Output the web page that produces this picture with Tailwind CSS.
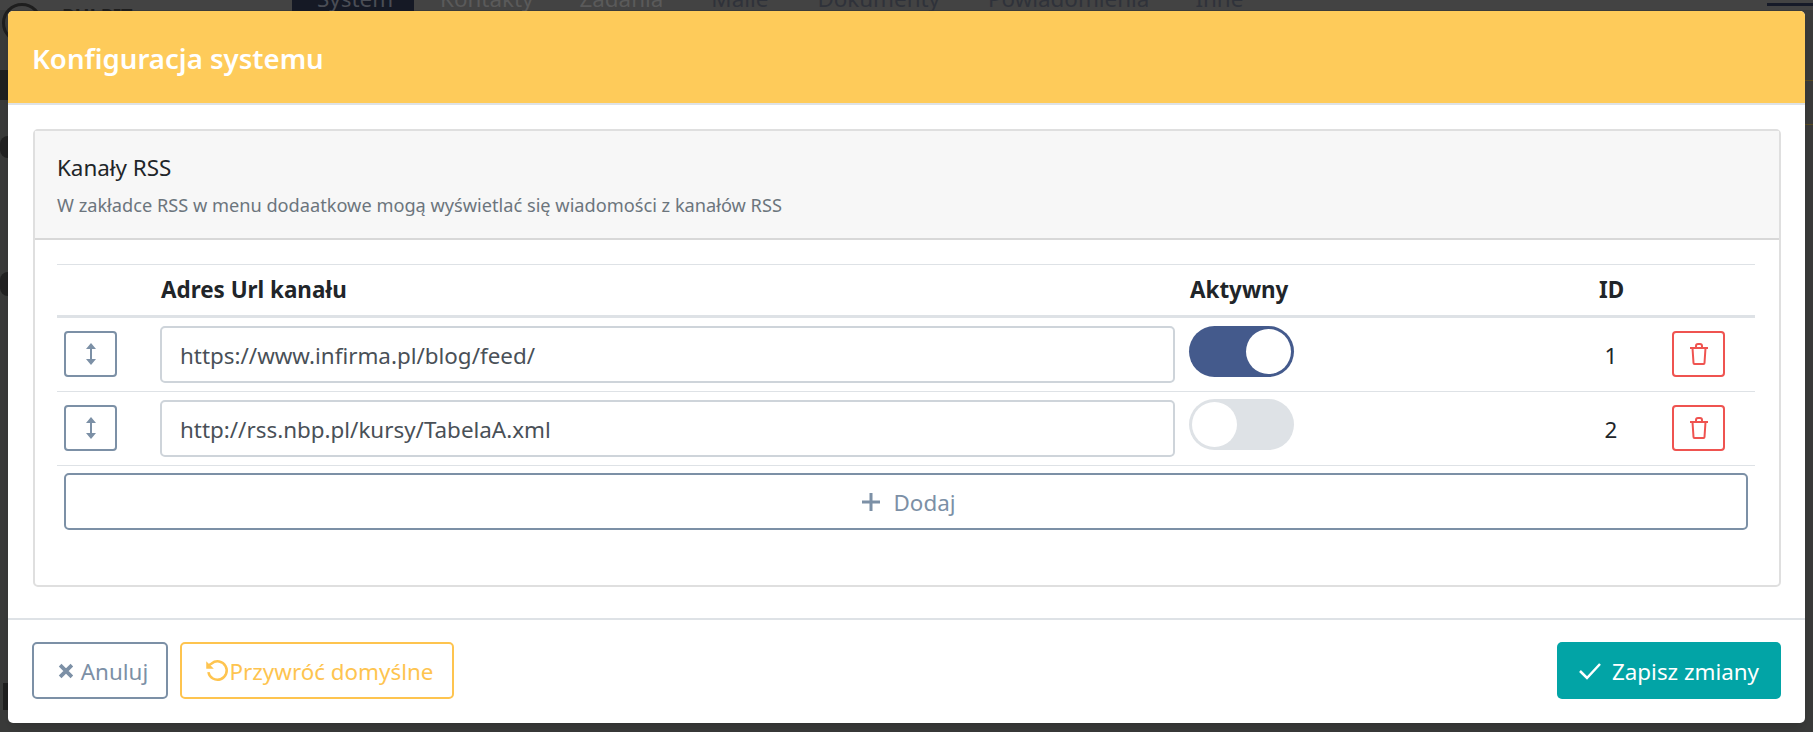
<!DOCTYPE html>
<html lang="pl">
<head>
<meta charset="utf-8">
<script src="https://cdn.jsdelivr.net/npm/@tailwindcss/browser@4"></script>
<title>Konfiguracja systemu</title>
</head>
<body class="h-[732px] w-[1813px] overflow-hidden bg-[#3a3b3a] font-['Noto_Sans','Open_Sans',sans-serif]">
<div class="relative h-[732px] w-[1813px] overflow-hidden">
  <!-- dimmed page behind the dialog -->
  <div class="absolute inset-x-0 top-0 h-[10px] bg-[#434343]"></div>
  <div class="absolute left-[2px] top-[3px] h-[40px] w-[40px] rounded-full border-[3px] border-[#1e1e1e]"></div>
  <div class="absolute left-[62px] top-[3px] text-[20px] font-bold leading-[25px] text-[#1e1e1e]">PULPIT</div>
  <div class="absolute left-[292px] top-[-14px] flex h-[25px] items-center text-[22.400px] leading-[25px] text-[#5a5a5a]">
    <span class="bg-[#151925] pl-[25px] pr-[21px] text-[#4a4d55]">System</span>
    <span class="ml-[26px]">Kontakty</span>
    <span class="ml-[46px]">Zadania</span>
    <span class="ml-[48px] text-[#2f323a]">Maile</span>
    <span class="ml-[49px] text-[#2f323a]">Dokumenty</span>
    <span class="ml-[48px] text-[#2f323a]">Powiadomienia</span>
    <span class="ml-[46px] text-[#2f323a]">Inne</span>
  </div>
  <div class="absolute left-[1767px] top-[3px] h-[3px] w-[46px] bg-[#161a28]"></div>
  <div class="absolute right-0 top-[80px] h-[1px] w-[8px] bg-[#5a4c22]"></div>
  <div class="absolute right-0 top-[124px] h-[1px] w-[8px] bg-[#5a4c22]"></div>
  <div class="absolute left-0 top-[70px] h-[30px] w-[8px] bg-[#1f1f1f]"></div>
  <div class="absolute left-0 top-[136px] h-[22px] w-[8px] rounded-l-full bg-[#222]"></div>
  <div class="absolute left-0 top-[272px] h-[24px] w-[8px] rounded-l-full bg-[#222]"></div>
  <div class="absolute left-[3px] top-[683px] h-[27px] w-[5px] bg-[#1f1f1f]"></div>

  <div class="relative ml-[8px] mt-[11px] flex h-[712px] w-[1797px] flex-col overflow-hidden rounded-[5px] bg-white shadow-lg">
    <div class="flex h-[94px] shrink-0 items-center border-b-2 border-[#dee2e6] bg-[#fecb5a] pl-[24px]">
      <h1 class="pt-[3px] text-[27.600px] font-semibold text-white">Konfiguracja systemu</h1>
    </div>
    <div class="flex-1 pl-[25px] pr-[24px] pt-[24px]">
      <div class="h-[458px] rounded-[5px] border-2 border-[#dfdfdf]">
        <div class="h-[109px] border-b-2 border-[#d8d8d8] bg-[#f7f7f7] pl-[22px] pt-[22px]">
          <div class="text-[22.400px] leading-[30px] text-[#212529]">Kanały RSS</div>
          <div class="mt-[9px] text-[18.200px] leading-[27px] text-[#6c757d]">W zakładce RSS w menu dodaatkowe mogą wyświetlać się wiadomości z kanałów RSS</div>
        </div>
        <div class="pl-[22px] pr-[24px] pt-[24px]">
          <div class="flex h-[54px] items-center border-y border-b-[3px] border-[#dee2e6] text-[22.400px] font-bold text-[#212529]">
            <span class="ml-[104px] w-[1029px]">Adres Url kanału</span>
            <span class="w-[409px]">Aktywny</span>
            <span>ID</span>
          </div>
          <div class="flex h-[74px] items-center border-b border-[#dee2e6] pl-[7px]">
            <button class="mb-[1px] flex h-[46px] w-[53px] items-center justify-center rounded-[4px] border-2 border-[#7c90a6] text-[#7c90a6]">
              <svg width="12" height="24" viewBox="0 0 12 24" fill="currentColor"><path d="M6 1 11 7H7v10h4l-5 6-5-6h4V7H1z"/></svg>
            </button>
            <div class="ml-[43px] flex h-[57px] w-[1015px] items-center rounded-[5px] border-2 border-[#ced4da] pl-[18px] pt-[3px] text-[22.400px] text-[#495057]">https://www.infirma.pl/blog/feed/</div>
            <div class="mb-[7px] ml-[14px] flex h-[51px] w-[105px] items-center justify-end rounded-full bg-[#445a8c] pr-[3px]"><div class="h-[45px] w-[45px] rounded-full bg-white"></div></div>
            <div class="ml-[300px] w-[34px] pt-[2px] text-center text-[22.400px] text-[#212529]">1</div>
            <button class="mb-[1px] ml-[44px] flex h-[46px] w-[53px] items-center justify-center rounded-[4px] border-2 border-[#ef5350] text-[#ef5350]">
              <svg width="20" height="22" viewBox="0 0 20 22" fill="none" stroke="currentColor" stroke-width="2"><path d="M1 5h18M7 5V3a2 2 0 0 1 2-2h2a2 2 0 0 1 2 2v2M3.500 5l1 15a1 1 0 0 0 1 1h9a1 1 0 0 0 1-1l1-15"/></svg>
            </button>
          </div>
          <div class="flex h-[74px] items-center border-b border-[#dee2e6] pl-[7px]">
            <button class="mb-[1px] flex h-[46px] w-[53px] items-center justify-center rounded-[4px] border-2 border-[#7c90a6] text-[#7c90a6]">
              <svg width="12" height="24" viewBox="0 0 12 24" fill="currentColor"><path d="M6 1 11 7H7v10h4l-5 6-5-6h4V7H1z"/></svg>
            </button>
            <div class="ml-[43px] flex h-[57px] w-[1015px] items-center rounded-[5px] border-2 border-[#ced4da] pl-[18px] pt-[2px] text-[22.400px] text-[#495057]">http://rss.nbp.pl/kursy/TabelaA.xml</div>
            <div class="mb-[8px] ml-[14px] flex h-[51px] w-[105px] items-center rounded-full bg-[#dee2e6] pl-[3px]"><div class="h-[45px] w-[45px] rounded-full bg-white"></div></div>
            <div class="ml-[300px] w-[34px] pt-[2px] text-center text-[22.400px] text-[#212529]">2</div>
            <button class="mb-[1px] ml-[44px] flex h-[46px] w-[53px] items-center justify-center rounded-[4px] border-2 border-[#ef5350] text-[#ef5350]">
              <svg width="20" height="22" viewBox="0 0 20 22" fill="none" stroke="currentColor" stroke-width="2"><path d="M1 5h18M7 5V3a2 2 0 0 1 2-2h2a2 2 0 0 1 2 2v2M3.500 5l1 15a1 1 0 0 0 1 1h9a1 1 0 0 0 1-1l1-15"/></svg>
            </button>
          </div>
          <div class="pl-[7px] pt-[7px]">
            <button class="flex h-[57px] w-[1684px] items-center justify-center gap-[13px] rounded-[5px] border-2 border-[#7c90a6] pl-[4px] text-[22.400px] text-[#7c90a6]">
              <svg width="20" height="20" viewBox="0 0 20 20" fill="none" stroke="currentColor" stroke-width="3"><path d="M10 1v18M1 10h18"/></svg>
              <span class="pt-[2px]">Dodaj</span>
            </button>
          </div>
        </div>
      </div>
    </div>
    <div class="flex h-[105px] shrink-0 items-center justify-between border-t-2 border-[#dee2e6] pl-[24px] pr-[24px] pb-[2px]">
      <div class="flex gap-[12px]">
        <button class="flex h-[57px] w-[136px] items-center justify-center gap-[7px] rounded-[5px] border-2 border-[#7c90a6] pl-[6px] text-[22.400px] text-[#7c90a6]">
          <svg width="16" height="16" viewBox="0 0 15 15" fill="none" stroke="currentColor" stroke-width="3.500"><path d="m2 2 11 11M13 2 2 13"/></svg>
          <span class="pt-[2px]">Anuluj</span>
        </button>
        <button class="flex h-[57px] w-[274px] items-center justify-center gap-[1px] rounded-[5px] border-2 border-[#fec44f] pl-[2px] text-[22.400px] text-[#fec44f]">
          <svg width="26" height="26" viewBox="0 0 24 24" fill="none" stroke="currentColor" stroke-width="2.300"><path d="M5 13a8.500 8.500 0 1 0 3-8l-3 2"/><path d="M3 3v7h7" fill="currentColor" stroke="none"/></svg>
          <span class="pt-[2px]">Przywróć domyślne</span>
        </button>
      </div>
      <button class="flex h-[57px] w-[224px] items-center justify-center gap-[11px] rounded-[5px] bg-[#02a4a6] text-[22.400px] text-white">
        <svg width="22" height="18" viewBox="0 0 22 18" fill="none" stroke="currentColor" stroke-width="2.500"><path d="m1 9 7 7L21 2"/></svg>
        <span class="pt-[2px]">Zapisz zmiany</span>
      </button>
    </div>
  </div>
</div>
</body>
</html>
